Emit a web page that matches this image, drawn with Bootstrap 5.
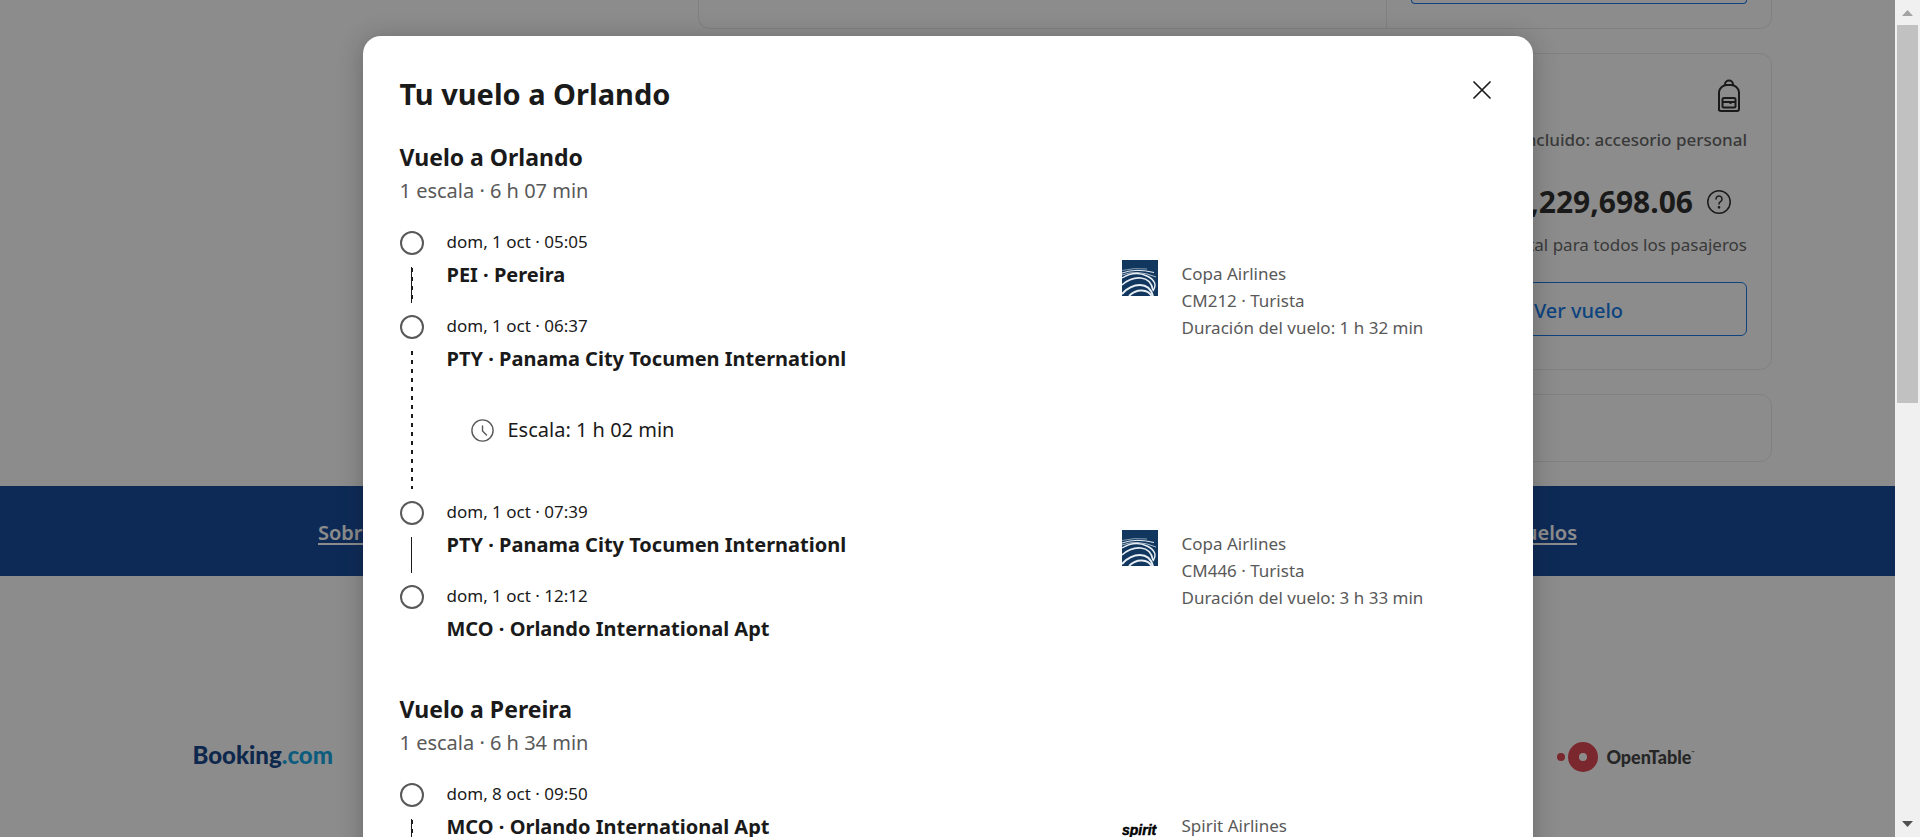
<!DOCTYPE html>
<html lang="es">
<head>
<meta charset="utf-8">
<meta name="viewport" content="width=device-width, initial-scale=1">
<title>Tu vuelo a Orlando</title>
<link href="https://cdn.jsdelivr.net/npm/bootstrap@5.3.0/dist/css/bootstrap.min.css" rel="stylesheet">
<style>
  :root { --ink: #1a1a1a; --muted: #595959; --brand: #003b95; --action: #006ce4; --line: #e7e7e7; }
  body { font-family: "Noto Sans", "Open Sans", sans-serif; color: var(--ink); font-size: 17px; line-height: 27px; }
  .site { min-width: 0; }

  /* results behind the dialog */
  .results { max-width: 1649px; padding-left: 575px; }
  .offer { border: 1px solid var(--line); border-radius: 12px; }
  .offer-cut { height: 29px; border-top: 0; border-radius: 0 0 12px 12px; }
  .offer-side { width: 385px; padding: 0 24px; }
  .offer-cut .offer-side { border-left: 1px solid var(--line); }
  .offer-cut .btn-flight { height: 4px; border-top: 0; border-radius: 0 0 6px 6px; }
  .offer-main { height: 317px; }
  .offer-main .offer-side { padding-top: 24px; }
  .offer-next { height: 68px; }
  .btn-flight { color: var(--action); border: 1px solid var(--action); border-radius: 6px; height: 54px; padding: 4px 0 0; font-size: 20px; font-weight: 500; }
  .baggage { margin-top: 12px; color: var(--muted); font-size: 17px; font-weight: 500; }
  .price { margin-top: 28px; gap: 14px; font-size: 30px; line-height: 42px; font-weight: 700; }
  .price-note { color: var(--muted); margin-top: 8px; margin-bottom: 24px; }
  .link-band { background: var(--brand); height: 90px; margin-top: 24px; padding-top: 2px; }
  .link-band nav { max-width: 1259px; }
  .link-band a { color: #fff; font-size: 20px; font-weight: 600; text-underline-offset: 3px; text-decoration-thickness: 2px; }
  .partners { max-width: 1510px; margin-top: 160px; height: 42px; padding-right: 8px; }
  .logo-booking { font-family: Lato, sans-serif; font-weight: 900; font-size: 24px; color: #003580; padding-bottom: 6px; }
  .logo-booking span { color: #009fe3; }
  .logo-table { font-family: Lato, sans-serif; font-weight: 900; font-size: 18px; color: #333; }
  .logo-table small { font-size: 4px; line-height: 18px; vertical-align: top; }

  /* dialog */
  .overlay { background: rgba(26, 26, 26, .5); padding-top: 36px; }
  .dialog { width: 100%; max-width: 1170px; background: #fff; border-radius: 18px; padding: 36px 33px 0 37px; box-shadow: 0 3px 24px rgba(26, 26, 26, .3); }
  .dialog h2 { font-size: 29px; line-height: 44px; font-weight: 700; }
  .dialog h3 { font-size: 23px; line-height: 36px; font-weight: 700; }
  .trip-sum { font-size: 20px; line-height: 32px; color: var(--muted); margin-bottom: 21px; }
  .btn-x { width: 36px; height: 36px; color: var(--ink); }
  .leg-group { height: 552px; padding-top: 23px; }
  .leg { min-height: 270px; }
  .stop { gap: 22px; min-height: 84px; }
  .stop.layover { min-height: 186px; }
  .rail { width: 25px; padding-top: 3px; }
  .dot { width: 24px; height: 24px; border: 2px solid var(--muted); border-radius: 50%; }
  .track { width: 2px; margin: 12px 0 9px; }
  .track-solid { background: linear-gradient(90deg, var(--ink) 1px, transparent 1px); }
  .track-dash { background: repeating-linear-gradient(var(--ink) 0 4px, transparent 4px 9px); }
  .track-mixed { background: linear-gradient(90deg, var(--ink) 1px, transparent 1px), repeating-linear-gradient(transparent 0 1px, var(--ink) 1px 5px, transparent 5px 9px); }
  .place { font-size: 20px; line-height: 30px; font-weight: 700; margin-top: 5px; }
  .wait { font-size: 20px; line-height: 30px; padding-left: 24px; margin-top: 41px; gap: 14px; }
  .carrier { width: 378px; padding-top: 32px; gap: 24px; color: var(--muted); }
  .carrier-logo { width: 36px; height: 36px; }

  /* scroll bar column */
  .scroller { width: 25px; background: #f0f0f0; }
  .scroller i { width: 21px; height: 378px; background: #c1c1c1; }
</style>
</head>
<body class="vh-100 overflow-hidden d-flex">

<div class="site flex-grow-1 position-relative overflow-hidden">
  <main class="results mx-auto d-flex flex-column gap-4">
    <section class="offer offer-cut d-flex justify-content-end">
      <div class="offer-side"><button class="btn btn-flight w-100 d-block p-0" type="button" aria-label="Ver vuelo"></button></div>
    </section>
    <section class="offer offer-main d-flex justify-content-end">
      <div class="offer-side d-flex flex-column text-end">
        <svg class="align-self-end" width="36" height="36" viewBox="0 0 36 36" fill="none" stroke="#1a1a1a" stroke-width="2" stroke-linejoin="round" aria-hidden="true">
          <path d="M8 33V14a8 8 0 0 1 8-7h4a8 8 0 0 1 8 7v17a2 2 0 0 1-2 2H10a2 2 0 0 1-2-2"/>
          <path d="M14 7.500v-1a4 4 0 0 1 8 0v1"/>
          <rect x="11.500" y="20" width="13" height="9.500" rx="1.500"/><path d="M11.500 24h13M19.500 24v2"/>
        </svg>
        <div class="baggage">Incluido: accesorio personal</div>
        <div class="price d-flex justify-content-end align-items-center">COP&nbsp;2,229,698.06
          <svg class="me-3" width="24" height="24" viewBox="0 0 24 24" fill="none" stroke="#1a1a1a" stroke-width="1.500" stroke-linecap="round" aria-hidden="true">
            <circle cx="12" cy="12" r="11.200"/><path d="M9 9a3 3 0 1 1 4.500 2.600c-1 .600-1.500 1.100-1.500 2.400"/><circle cx="12" cy="17.300" r=".600" fill="#1a1a1a"/>
          </svg>
        </div>
        <div class="price-note">Total para todos los pasajeros</div>
        <button class="btn btn-flight w-100" type="button">Ver vuelo</button>
      </div>
    </section>
    <section class="offer offer-next"></section>
  </main>

  <div class="link-band d-flex align-items-center">
    <nav class="d-flex justify-content-between w-100 mx-auto">
      <a href="#">Sobre nosotros</a>
      <a href="#">Vuelos</a>
    </nav>
  </div>
  <footer class="partners mx-auto d-flex justify-content-between align-items-center">
    <div class="logo-booking">Booking<span>.com</span></div>
    <div class="logo-table d-flex align-items-center gap-2">
      <svg width="41" height="30" viewBox="0 0 41 30" aria-hidden="true"><circle cx="4" cy="15" r="4" fill="#da3743"/><circle cx="26" cy="15" r="9.500" fill="none" stroke="#da3743" stroke-width="11"/></svg>
      <span>OpenTable<small>™</small></span>
    </div>
  </footer>

  <div class="overlay position-absolute top-0 start-0 w-100 h-100 overflow-hidden">
    <div class="dialog mx-auto" role="dialog" aria-modal="true" aria-labelledby="dlg-title">
      <div class="d-flex justify-content-between align-items-start">
        <h2 id="dlg-title" class="mb-0">Tu vuelo a Orlando</h2>
        <button class="btn btn-x p-0 d-flex align-items-center justify-content-center" type="button" aria-label="Cerrar">
          <svg width="18" height="18" viewBox="0 0 18 18" stroke="currentColor" stroke-width="1.700" stroke-linecap="round"><path d="M1 1l16 16M17 1L1 17"/></svg>
        </button>
      </div>

      <section class="leg-group">
        <h3 class="mb-0">Vuelo a Orlando</h3>
        <div class="trip-sum">1 escala · 6 h 07 min</div>

        <div class="leg d-flex">
          <div class="flex-grow-1">
            <div class="stop d-flex">
              <div class="rail d-flex flex-column align-items-center"><span class="dot"></span><span class="track track-mixed flex-grow-1"></span></div>
              <div><div>dom, 1 oct · 05:05</div><div class="place">PEI · Pereira</div></div>
            </div>
            <div class="stop layover d-flex">
              <div class="rail d-flex flex-column align-items-center"><span class="dot"></span><span class="track track-dash flex-grow-1"></span></div>
              <div>
                <div>dom, 1 oct · 06:37</div><div class="place">PTY · Panama City Tocumen Internationl</div>
                <div class="wait d-flex align-items-center">
                  <svg width="23" height="23" viewBox="0 0 23 23" fill="none" stroke="#595959" stroke-width="1.400" stroke-linecap="round" aria-hidden="true"><circle cx="11.500" cy="11.500" r="10.600"/><path d="M11.500 7v5l4 4"/></svg>
                  <span>Escala: 1 h 02 min</span>
                </div>
              </div>
            </div>
          </div>
          <div class="carrier d-flex">
            <svg class="carrier-logo" viewBox="0 0 36 36" aria-hidden="true"><use href="#copa"/></svg>
            <div><div>Copa Airlines</div><div>CM212 · Turista</div><div>Duración del vuelo: 1 h 32 min</div></div>
          </div>
        </div>

        <div class="d-flex">
          <div class="flex-grow-1">
            <div class="stop d-flex">
              <div class="rail d-flex flex-column align-items-center"><span class="dot"></span><span class="track track-solid flex-grow-1"></span></div>
              <div><div>dom, 1 oct · 07:39</div><div class="place">PTY · Panama City Tocumen Internationl</div></div>
            </div>
            <div class="stop d-flex">
              <div class="rail d-flex flex-column align-items-center"><span class="dot"></span></div>
              <div><div>dom, 1 oct · 12:12</div><div class="place">MCO · Orlando International Apt</div></div>
            </div>
          </div>
          <div class="carrier d-flex">
            <svg class="carrier-logo" viewBox="0 0 36 36" aria-hidden="true"><use href="#copa"/></svg>
            <div><div>Copa Airlines</div><div>CM446 · Turista</div><div>Duración del vuelo: 3 h 33 min</div></div>
          </div>
        </div>
      </section>

      <section class="leg-group">
        <h3 class="mb-0">Vuelo a Pereira</h3>
        <div class="trip-sum">1 escala · 6 h 34 min</div>
        <div class="d-flex">
          <div class="flex-grow-1">
            <div class="stop d-flex">
              <div class="rail d-flex flex-column align-items-center"><span class="dot"></span><span class="track track-mixed flex-grow-1"></span></div>
              <div><div>dom, 8 oct · 09:50</div><div class="place">MCO · Orlando International Apt</div></div>
            </div>
          </div>
          <div class="carrier d-flex">
            <svg class="carrier-logo" viewBox="0 0 36 36" role="img" aria-label="spirit"><text x="0" y="23" font-family="Liberation Sans, sans-serif" font-size="14" font-weight="700" font-style="italic" stroke="#000" stroke-width=".500">spirit</text></svg>
            <div><div>Spirit Airlines</div></div>
          </div>
        </div>
      </section>
    </div>
  </div>
</div>

<div class="scroller flex-shrink-0 d-flex flex-column align-items-center" aria-hidden="true">
  <svg width="25" height="25" viewBox="0 0 25 25"><path d="M7 16l5.500-6 5.500 6z" fill="#a3a3a3"/></svg>
  <i></i>
  <svg class="mt-auto" width="25" height="25" viewBox="0 0 25 25"><path d="M7 9l5.500 6L18 9z" fill="#505050"/></svg>
</div>

<svg width="0" height="0" class="position-absolute" aria-hidden="true">
  <symbol id="copa" viewBox="0 0 36 36">
    <rect width="36" height="36" fill="#11375f"/>
    <g fill="none" stroke="#e8eef4">
      <path d="M0 10.500Q12 7.500 25 9" stroke-width=".800" opacity=".7"/>
      <path d="M0 13Q14 8 32 12.500" stroke-width="1"/>
      <path d="M0 15Q15 9 34 17" stroke-width=".900" opacity=".8"/>
      <path d="M0 18Q13 10 25 16T31 31" stroke-width="1.400"/>
      <path d="M0 25Q9 17 19 18T31 30" stroke-width="1.600"/>
      <path d="M0 34Q8 25 18 25T31 36" stroke-width="1.900"/>
      <path d="M7 36Q13 30 20 30.500T29.500 36" stroke-width="1.900"/>
    </g>
  </symbol>
</svg>
<script src="https://cdn.jsdelivr.net/npm/bootstrap@5.3.0/dist/js/bootstrap.bundle.min.js"></script>
</body>
</html>
